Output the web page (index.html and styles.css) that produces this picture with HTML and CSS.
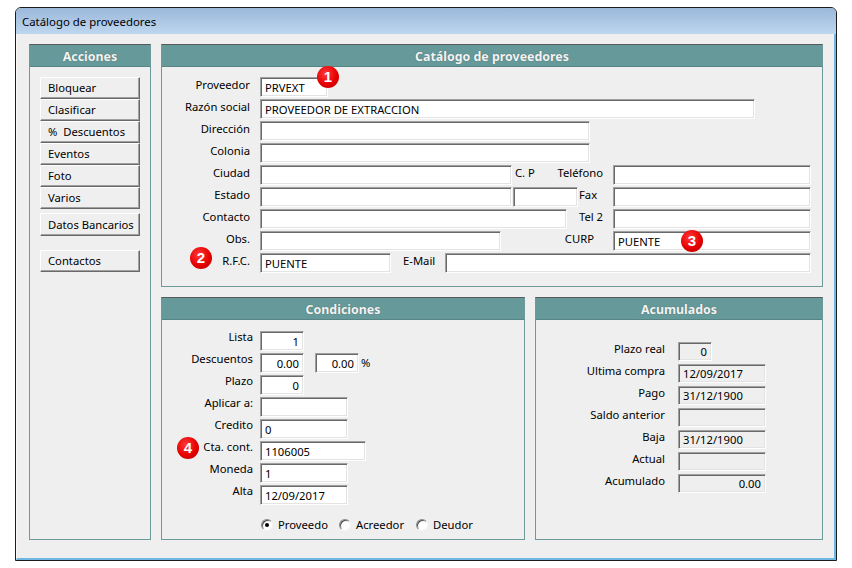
FILE: index.html
```html
<!DOCTYPE html>
<html lang="es">
<head>
<meta charset="utf-8">
<title>Catálogo de proveedores</title>
<link rel="stylesheet" href="styles.css">
</head>
<body>
<div class="window">
  <div class="titlebar">Catálogo de proveedores</div>
  <div class="client">
    <section class="panel acciones">
      <h2 class="ph">Acciones</h2>
      <div class="acc-body">
        <button class="btn">Bloquear</button>
        <button class="btn">Clasificar</button>
        <button class="btn">%&nbsp; Descuentos</button>
        <button class="btn">Eventos</button>
        <button class="btn">Foto</button>
        <button class="btn">Varios</button>
        <button class="btn btn-bancos">Datos Bancarios</button>
        <button class="btn btn-contactos">Contactos</button>
      </div>
    </section>

    <div class="main">
      <section class="panel catalogo">
        <h2 class="ph">Catálogo de proveedores</h2>
        <div class="cat-body">
          <div class="row"><span class="lbl">Proveedor</span><div class="tb w68">PRVEXT<span class="badge b1">1</span></div></div>
          <div class="row"><span class="lbl">Razón social</span><div class="tb w495">PROVEEDOR DE EXTRACCION</div></div>
          <div class="row"><span class="lbl">Dirección</span><div class="tb w330"></div></div>
          <div class="row"><span class="lbl">Colonia</span><div class="tb w330"></div></div>
          <div class="row"><span class="lbl">Ciudad</span><div class="tb w252"></div><span class="txt cp">C. P</span><span class="lbl-r">Teléfono</span><div class="tb w198"></div></div>
          <div class="row"><span class="lbl">Estado</span><div class="tb w252"></div><div class="tb w65 ml1"></div><span class="txt fax">Fax</span><div class="tb w198"></div></div>
          <div class="row"><span class="lbl">Contacto</span><div class="tb w307"></div><span class="lbl-r">Tel 2</span><div class="tb w198"></div></div>
          <div class="row"><span class="lbl">Obs.</span><div class="tb w241"></div><span class="lbl-r curp">CURP</span><div class="tb w198">PUENTE<span class="badge b3">3</span></div></div>
          <div class="row"><span class="lbl">R.F.C.</span><span class="badge b2">2</span><div class="tb w131">PUENTE</div><span class="txt email">E-Mail</span><div class="tb grow"></div></div>
        </div>
      </section>

      <div class="lower">
        <section class="panel cond">
          <h2 class="ph">Condiciones</h2>
          <div class="cond-body">
            <div class="row"><span class="lbl lc">Lista</span><div class="tb w44 num">1</div></div>
            <div class="row"><span class="lbl lc">Descuentos</span><div class="tb w44 num">0.00</div><div class="tb w44 num ml11">0.00</div><span class="txt pct">%</span></div>
            <div class="row"><span class="lbl lc">Plazo</span><div class="tb w44 num">0</div></div>
            <div class="row"><span class="lbl lc">Aplicar a:</span><div class="tb w88"></div></div>
            <div class="row"><span class="lbl lc">Credito</span><div class="tb w88">0</div></div>
            <div class="row"><span class="lbl lc">Cta. cont.</span><span class="badge b4">4</span><div class="tb w106">1106005</div></div>
            <div class="row"><span class="lbl lc">Moneda</span><div class="tb w88">1</div></div>
            <div class="row"><span class="lbl lc">Alta</span><div class="tb w88">12/09/2017</div></div>
            <div class="radios">
              <label class="radio r1"><span class="dot on"></span>Proveedo</label>
              <label class="radio r2"><span class="dot"></span>Acreedor</label>
              <label class="radio r3"><span class="dot"></span>Deudor</label>
            </div>
          </div>
        </section>

        <section class="panel acum">
          <h2 class="ph">Acumulados</h2>
          <div class="acum-body">
            <div class="row ra"><span class="lbl la">Plazo real</span><div class="tb ro w34 num">0</div></div>
            <div class="row ra"><span class="lbl la">Ultima compra</span><div class="tb ro w88">12/09/2017</div></div>
            <div class="row ra"><span class="lbl la">Pago</span><div class="tb ro w88">31/12/1900</div></div>
            <div class="row ra"><span class="lbl la">Saldo anterior</span><div class="tb ro w88"></div></div>
            <div class="row ra"><span class="lbl la">Baja</span><div class="tb ro w88">31/12/1900</div></div>
            <div class="row ra"><span class="lbl la">Actual</span><div class="tb ro w88"></div></div>
            <div class="row ra"><span class="lbl la">Acumulado</span><div class="tb ro w88 num">0.00</div></div>
          </div>
        </section>
      </div>
    </div>
  </div>
</div>
</body>
</html>
```
FILE: styles.css
```css
* { box-sizing: border-box; }

body {
  margin: 0;
  background: #ffffff;
  font-family: "Noto Sans", "DejaVu Sans", sans-serif;
  font-size: 11.25px;
  color: #000;
}

.window {
  margin: 7px 0 0 15px;
  width: 822px;
  height: 554px;
  border: 1px solid #1c1c1c;
  border-radius: 6px 6px 0 0;
  background: #efefef;
  display: flex;
  flex-direction: column;
  overflow: hidden;
}

.titlebar {
  flex: none;
  height: 26px;
  padding: 6px 0 0 6px;
  font-size: 11.4px;
  line-height: 16px;
  color: #000;
  background: linear-gradient(#9bb8da, #bed6ef);
}

.client {
  flex: 1;
  display: flex;
  gap: 10px;
  padding: 10px 11px 0 12px;
  border-left: 1px solid #f8f8f8;
  border-right: 2px solid #6fb7e3;
  border-bottom: 2px solid #6fb7e3;
  background: #efefef;
}

.panel {
  border: 1px solid #6c9a9a;
  border-top-color: #5a5a5a;
  background: #efefef;
  display: flex;
  flex-direction: column;
}

.ph {
  margin: 0;
  flex: none;
  height: 22px;
  background: #669999;
  border-bottom: 1px solid #578585;
  color: #f4f4f4;
  font-size: 12.4px;
  font-weight: bold;
  line-height: 23px;
  text-align: center;
  text-shadow: 0 0 1px rgba(40, 60, 60, 0.6);
  overflow: visible;
}

/* Acciones */
.acciones { width: 122px; height: 496px; }
.acc-body { padding: 10px 0 0 10px; display: flex; flex-direction: column; }

.btn {
  display: block;
  width: 100px;
  height: 22px;
  margin: 0;
  padding: 0 0 0 7px;
  font: inherit;
  line-height: 20px;
  text-align: left;
  color: #000;
  background: #efefef;
  border: 1px solid;
  border-color: #ffffff #696969 #696969 #ffffff;
  box-shadow: inset -1px -1px 0 #a0a0a0;
  white-space: nowrap;
}
.btn-bancos { margin-top: 4px; height: 23px; }
.btn-contactos { margin-top: 14px; }

/* Main */
.main { width: 662px; display: flex; flex-direction: column; gap: 10px; }
.catalogo { height: 243px; }
.lower { display: flex; gap: 10px; height: 243px; }
.cond { width: 364px; }
.acum { width: 288px; }

.row {
  position: relative;
  display: flex;
  align-items: flex-start;
  height: 20px;
  margin-bottom: 2px;
}

.lbl {
  flex: none;
  width: 88px;
  margin-right: 10px;
  text-align: right;
  line-height: 15px;
  white-space: nowrap;
}
.txt { flex: none; line-height: 15px; white-space: nowrap; }
.lbl-r { flex: 1; text-align: right; margin-right: 10px; line-height: 15px; white-space: nowrap; }

.tb {
  position: relative;
  flex: none;
  height: 20px;
  padding: 2px 4px 0 4px;
  line-height: 16px;
  background: #ffffff;
  border: 1px solid;
  border-color: #a0a0a0 #ffffff #ffffff #a0a0a0;
  box-shadow: inset 1px 1px 0 #696969, inset -1px -1px 0 #e3e3e3;
  white-space: nowrap;
}
.tb.num { text-align: right; }
.tb.ro { background: #efefef; height: 19px; padding-top: 1px; }
.tb.grow { flex: 1; }

.w34 { width: 34px; }
.w44 { width: 44px; }
.w65 { width: 65px; }
.w68 { width: 68px; }
.w88 { width: 88px; }
.w106 { width: 106px; }
.w131 { width: 131px; }
.w198 { width: 198px; }
.w241 { width: 241px; }
.w252 { width: 252px; }
.w307 { width: 307px; }
.w330 { width: 330px; }
.w495 { width: 495px; }
.ml1 { margin-left: 1px; }
.ml11 { margin-left: 11px; }

.cat-body { padding: 10px 11px 0 0; }
.cp { margin-left: 3px; }
.fax { flex: 1; margin-left: 1px; }
.curp { margin-right: 19px; }
.email { margin: 0 10px 0 12px; }

/* Condiciones */
.cond-body { padding: 11px 0 0 0; }
.lc { width: 91px; margin-right: 7px; margin-top: -2px; }
.pct { margin-left: 2px; margin-top: 2px; }

.radios {
  display: flex;
  margin: 12px 0 0 99px;
  height: 15px;
}
.radio {
  display: flex;
  align-items: flex-start;
  white-space: nowrap;
  line-height: 15px;
}
.r1 { width: 78px; }
.r2 { width: 77px; }
.r3 { width: 60px; }

.dot {
  position: relative;
  flex: none;
  width: 12px;
  height: 12px;
  margin: 2px 5px 0 0;
  border-radius: 50%;
  background: #ffffff;
  border: 1px solid;
  border-color: #8a8a8a #f4f4f4 #f4f4f4 #8a8a8a;
  box-shadow: inset 1px 1px 0 #505050;
}
.dot.on::after {
  content: "";
  position: absolute;
  left: 3px;
  top: 3px;
  width: 4px;
  height: 4px;
  border-radius: 50%;
  background: #000;
}

/* Acumulados */
.acum-body { padding: 22px 0 0 0; }
.la { width: 129px; margin-right: 13px; margin-top: -1px; }
.ra { height: 19px; margin-bottom: 3px; }

/* Badges */
.badge {
  position: absolute;
  width: 22px;
  height: 22px;
  border-radius: 50%;
  background: radial-gradient(circle at 40% 35%, #ff3a3a 0%, #e60000 55%, #b30000 100%);
  color: #ffffff;
  font-family: "Liberation Sans", Arial, sans-serif;
  font-weight: bold;
  font-size: 15px;
  line-height: 22px;
  text-align: center;
  z-index: 2;
}
.b1 { left: 56px; top: -12px; }
.b2 { left: 28px; top: -6px; }
.b3 { left: 67px; top: -2px; }
.b4 { left: 15px; top: -4px; }
```
